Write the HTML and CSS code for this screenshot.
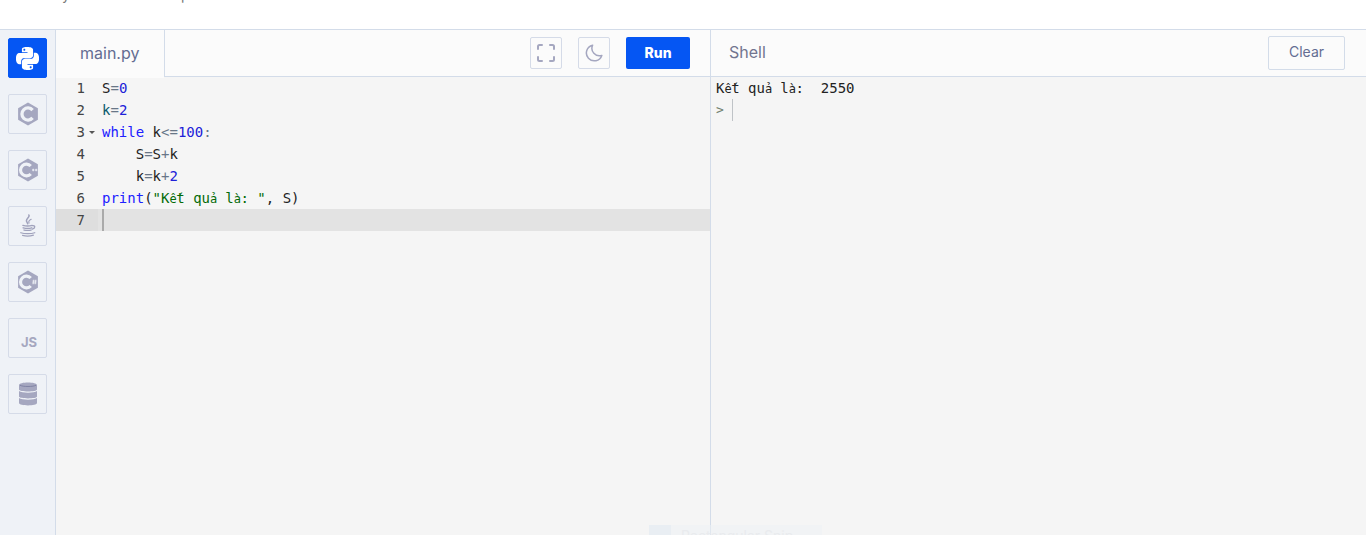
FILE: index.html
```html
<!DOCTYPE html>
<html lang="vi">
<head>
<meta charset="utf-8">
<title>main.py</title>
<link rel="stylesheet" href="styles.css">
</head>
<body>
<div class="page">
  <div class="topbar"><span class="clip clip-y">y</span><span class="clip clip-p">p</span></div>
  <div class="compiler">
    <nav class="sidebar">
      <a class="lang active"><svg class="ico-py" viewBox="0 0 24 24"><path fill="#fff" d="M14.25.18l.9.2.73.26.59.3.45.32.34.34.25.34.16.33.1.3.04.26.02.2-.01.13V8.5l-.05.63-.13.55-.21.46-.26.38-.3.31-.33.25-.35.19-.35.14-.33.1-.3.07-.26.04-.21.02H8.77l-.69.05-.59.14-.5.22-.41.27-.33.32-.27.35-.2.36-.15.37-.1.35-.07.32-.04.27-.02.21v3.06H3.17l-.21-.03-.28-.07-.32-.12-.35-.18-.36-.26-.36-.36-.35-.46-.32-.59-.28-.73-.21-.88-.14-1.05-.05-1.23.06-1.22.16-1.04.24-.87.32-.71.36-.57.4-.44.42-.33.42-.24.4-.16.36-.1.32-.05.24-.01h.16l.06.01h8.16v-.83H6.18l-.01-2.75-.02-.37.05-.34.11-.31.17-.28.25-.26.31-.23.38-.2.44-.18.51-.15.58-.12.64-.1.71-.06.77-.04.84-.02 1.27.05zm-6.3 1.98l-.23.33-.08.41.08.41.23.34.33.22.41.09.41-.09.33-.22.23-.34.08-.41-.08-.41-.23-.33-.33-.22-.41-.09-.41.09zm13.09 3.95l.28.06.32.12.35.18.36.27.36.35.35.47.32.59.28.73.21.88.14 1.04.05 1.23-.06 1.23-.16 1.04-.24.86-.32.71-.36.57-.4.45-.42.33-.42.24-.4.16-.36.09-.32.05-.24.02-.16-.01h-8.22v.82h5.84l.01 2.76.02.36-.05.34-.11.31-.17.29-.25.25-.31.24-.38.2-.44.17-.51.15-.58.13-.64.09-.71.07-.77.04-.84.01-1.27-.04-1.07-.14-.9-.2-.73-.25-.59-.3-.45-.33-.34-.34-.25-.34-.16-.33-.1-.3-.04-.25-.02-.2.01-.13v-5.34l.05-.64.13-.54.21-.46.26-.38.3-.32.33-.24.35-.2.35-.14.33-.1.3-.06.26-.04.21-.02.13-.01h5.84l.69-.05.59-.14.5-.21.41-.28.33-.32.27-.35.2-.36.15-.36.1-.35.07-.32.04-.28.02-.21V6.07h2.09l.14.01zm-6.47 14.25l-.23.33-.08.41.08.41.23.33.33.23.41.08.41-.08.33-.23.23-.33.08-.41-.08-.41-.23-.33-.33-.23-.41-.08-.41.08z"/></svg></a>
      <a class="lang"><svg class="ico-c" viewBox="0 0 24 26"><path fill="#a5a7c0" d="M12 .5l10.800 6.200v12.600L12 25.500 1.200 19.300V6.700z"/><path fill="none" stroke="#eff2f7" stroke-width="3.600" d="M17 8.700A6.600 6.600 0 1 0 17 17.300"/></svg></a>
      <a class="lang"><svg class="ico-c" viewBox="0 0 24 26"><path fill="#a5a7c0" d="M12 .5l10.800 6.200v12.600L12 25.500 1.200 19.300V6.700z"/><path fill="none" stroke="#eff2f7" stroke-width="3.400" d="M15 8.700A6.400 6.400 0 1 0 15 17.300"/><path stroke="#eff2f7" stroke-width="1.100" d="M16.400 13h2.600M17.700 11.700v2.600M19.600 13h2.600M20.900 11.700v2.600"/></svg></a>
      <a class="lang"><svg class="ico-java" viewBox="0 0 20 26"><g fill="none" stroke="#a0a2bc" stroke-linecap="round"><path stroke-width="1.700" d="M11 .8c1.500 2.600-3.800 4-2.600 7 .4 1 1.100 1.700 1.300 2.700"/><path stroke-width="1.300" d="M13.500 5.500c-2.300 1.300-3.300 2.500-2.300 4.200"/><path stroke-width="1.500" d="M4.300 12.400c2.500.6 8 .6 10.400 0M4.600 15c2.800.6 7.500.6 9.600 0M5.600 17.500c2.600.5 5.600.5 7.800 0M14.800 12.600c3.200-.6 3.900 2.500.1 3.900"/><path stroke-width="1.400" d="M2 20.500c4 1.400 11.500 1.400 15.500 0M4 23.500c4 .9 8 .9 12-.4"/></g></svg></a>
      <a class="lang"><svg class="ico-c" viewBox="0 0 24 26"><path fill="#a5a7c0" d="M12 .5l10.800 6.200v12.600L12 25.500 1.200 19.300V6.700z"/><path fill="none" stroke="#eff2f7" stroke-width="3.400" d="M15 8.700A6.400 6.400 0 1 0 15 17.300"/><path stroke="#eff2f7" stroke-width=".9" d="M18.300 10.500l-.7 5M20.500 10.500l-.7 5M16.800 12h4.600M16.600 14h4.600"/></svg></a>
      <a class="lang lang-js">JS</a>
      <a class="lang"><svg class="ico-db" viewBox="0 0 18 24"><path fill="#a5a7c0" d="M0 3c0-3.400 18-3.400 18 0v4.500c0 2.600-18 2.600-18 0zM0 9c3 2.300 15 2.300 18 0v5.500c0 2.500-18 2.500-18 0zM0 16c3 2.300 15 2.300 18 0v5c0 3.200-18 3.200-18 0z"/><path fill="none" stroke="#6f7196" stroke-width=".7" d="M1 3.200c2.500 1.700 13.500 1.700 16 0"/></svg></a>
    </nav>
    <section class="editor">
      <header class="editor-head">
        <div class="tab">main.py</div>
        <div class="tools">
          <button class="tool"><svg class="ico-tool" viewBox="0 0 18 18"><path fill="none" stroke="#a5a7c0" stroke-width="2" stroke-linecap="round" stroke-linejoin="round" d="M1 5V2.500C1 1.700 1.700 1 2.500 1H5M13 1h2.500c.8 0 1.500.7 1.500 1.500V5M17 13v2.500c0 .8-.7 1.500-1.500 1.500H13M5 17H2.500C1.700 17 1 16.300 1 15.500V13"/></svg></button>
          <button class="tool"><svg class="ico-tool" viewBox="0 0 18 18"><path fill="none" stroke="#a5a7c0" stroke-width="1.500" stroke-linejoin="round" d="M7.600 1.200a7.900 7.900 0 1 0 9.200 10.200A7.500 7.500 0 0 1 7.600 1.200z"/></svg></button>
          <button class="run">Run</button>
        </div>
      </header>
      <div class="code">
        <div class="line"><span class="num">1</span><span class="src"><i class="id">S</i><i class="op">=</i><i class="n">0</i></span></div>
        <div class="line"><span class="num">2</span><span class="src"><i class="v">k</i><i class="op">=</i><i class="n">2</i></span></div>
        <div class="line"><span class="num fold">3</span><span class="src"><i class="kw">while</i> <i class="id">k</i><i class="op">&lt;=</i><i class="n">100</i><i class="op">:</i></span></div>
        <div class="line"><span class="num">4</span><span class="src">    <i class="id">S</i><i class="op">=</i><i class="id">S</i><i class="op">+</i><i class="id">k</i></span></div>
        <div class="line"><span class="num">5</span><span class="src">    <i class="id">k</i><i class="op">=</i><i class="id">k</i><i class="op">+</i><i class="n">2</i></span></div>
        <div class="line"><span class="num">6</span><span class="src"><i class="kw">print</i><i class="id">(</i><i class="str">"K<i class="vn">ế</i>t qu<i class="vn">ả</i> l<i class="vn">à</i>: "</i><i class="id">, S)</i></span></div>
        <div class="line current"><span class="num">7</span><span class="src"><b class="caret"></b></span></div>
      </div>
    </section>
    <section class="shell">
      <header class="shell-head">
        <div class="shell-title">Shell</div>
        <button class="clear">Clear</button>
      </header>
      <div class="output">
        <div class="out-line">K<i class="vn">ế</i>t qu<i class="vn">ả</i> l<i class="vn">à</i>:  2550</div>
        <div class="prompt"><span class="gt">&gt;</span><span class="prompt-input"></span></div>
      </div>
    </section>
  </div>
  <div class="snip"><span class="snip-ico"></span><span class="snip-text">Rectangular Snip</span></div>
</div>
</body>
</html>
```
FILE: styles.css
```css
* { box-sizing: border-box; }
html, body { margin: 0; height: 100%; overflow: hidden; background: #fff; }
body { font-family: "Inter", "Liberation Sans", sans-serif; }
i { font-style: normal; }
.page { position: relative; height: 535px; display: flex; flex-direction: column; overflow: hidden; }

.topbar { height: 30px; flex: none; background: #fff; border-bottom: 1px solid #d3dce9; display: flex; overflow: hidden; }
.clip { font: 14px/14px "Inter", sans-serif; color: #777; margin-top: -12px; height: 14px; }
.clip-y { margin-left: 62px; }
.clip-p { margin-left: 111px; }

.compiler { flex: 1; display: grid; grid-template-columns: 56px 654px 1fr; min-height: 0; background: #f5f5f5; }

.sidebar { background: #eff2f7; border-right: 1px solid #d3dce9; padding: 8px 0 0 8px; display: flex; flex-direction: column; gap: 16px; }
.lang { width: 39px; height: 40px; flex: none; border: 1px solid #d5dbe8; border-radius: 2px; display: flex; align-items: center; justify-content: center; }
.lang.active { background: #0556f3; border-color: #0556f3; }
.ico-py { width: 23px; height: 23px; }
.ico-c { width: 22px; height: 24px; }
.ico-java { width: 18px; height: 24px; }
.ico-db { width: 18px; height: 24px; }
.lang-js { font: 700 13px/1 "Inter", sans-serif; color: #a5a7c0; padding: 8px 0 0 3px; }

.editor { display: flex; flex-direction: column; min-width: 0; }
.editor-head { height: 47px; flex: none; background: #fbfbfb; border-bottom: 1px solid #d3dce9; display: flex; justify-content: space-between; }
.tab { width: 109px; height: 47px; border-right: 1px solid #d3dce9; padding: 0 0 2px 24px; display: flex; align-items: center; font-size: 16px; color: #646d92; position: relative; background: #fbfbfb; }
.tab::after { content: ""; position: absolute; left: 0; right: 0; bottom: -1px; height: 1px; background: #fbfbfb; }
.tools { display: flex; align-items: flex-start; gap: 16px; padding: 7px 20px 0 0; }
.tool { width: 32px; height: 32px; padding: 0; background: #fbfbfb; border: 1px solid #d5dbe8; border-radius: 2px; display: flex; align-items: center; justify-content: center; }
.ico-tool { width: 18px; height: 18px; }
.run { width: 64px; height: 32px; padding: 0 0 2px; border: 0; border-radius: 2px; background: #0556f3; color: #fff; font: 800 14px "Inter", sans-serif; }

.code, .output { font: 14px/22px "DejaVu Sans Mono", monospace; }
.line { display: flex; height: 22px; color: #222; }
.line.current { background: #e3e3e3; }
.num { width: 42px; flex: none; text-align: right; padding-right: 13px; color: #444; position: relative; }
.current .num { background: #dedede; }
.fold::after { content: ""; position: absolute; left: 33px; top: 10px; border: 3px solid transparent; border-top: 3px solid #555; border-bottom: 0; }
.src { padding-left: 4px; white-space: pre; }
.caret { width: 2px; height: 22px; background: #aaa; display: block; }
.kw { color: #2020ff; }
.n { color: #2020d8; }
.op { color: #687687; }
.id { color: #222; }
.v { color: #0b5a6b; }
.str { color: #036a07; }
.vn { font-size: 12px; letter-spacing: -0.4px; }

.shell { border-left: 1px solid #d3dce9; display: flex; flex-direction: column; min-width: 0; }
.shell-head { height: 47px; flex: none; background: #fbfbfb; border-bottom: 1px solid #d3dce9; display: flex; justify-content: space-between; align-items: flex-start; padding: 6px 21px 0 18px; }
.shell-title { font-size: 16px; line-height: 32px; color: #72758f; }
.clear { width: 77px; height: 34px; padding: 0 0 3px; background: #fbfbfb; border: 1px solid #d3dce9; border-radius: 2px; color: #646d92; font: 400 14px "Inter", sans-serif; }
.output { padding-left: 5px; color: #222; }
.out-line { height: 22px; white-space: pre; }
.prompt { display: flex; height: 22px; }
.gt { width: 16px; color: #6f7f6f; font-size: 13px; }
.prompt-input { width: 1px; height: 22px; background: #bfc3c7; }

.snip { position: absolute; left: 649px; top: 525px; width: 173px; height: 22px; background: rgba(238, 241, 245, 0.5); display: flex; }
.snip-ico { width: 22px; background: rgba(225, 234, 242, 0.5); }
.snip-text { margin-left: 10px; font: 14px/22px "Inter", sans-serif; color: #e9ebee; }
```
